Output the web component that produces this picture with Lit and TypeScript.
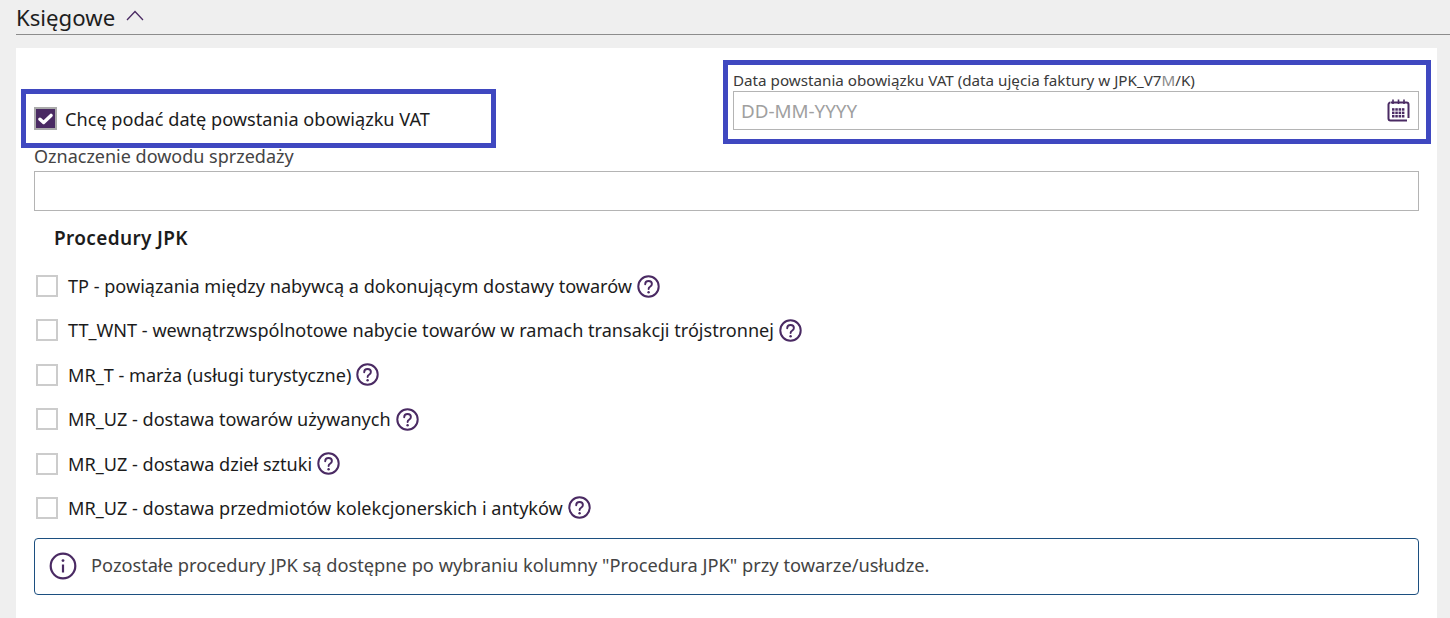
import { LitElement, html, css, svg } from "lit";
import { customElement } from "lit/decorators.js";

const rows = [
  "TP - powiązania między nabywcą a dokonującym dostawy towarów",
  "TT_WNT - wewnątrzwspólnotowe nabycie towarów w ramach transakcji trójstronnej",
  "MR_T - marża (usługi turystyczne)",
  "MR_UZ - dostawa towarów używanych",
  "MR_UZ - dostawa dzieł sztuki",
  "MR_UZ - dostawa przedmiotów kolekcjonerskich i antyków",
];

const dots = [0, 1, 2].flatMap((r) =>
  [0, 1, 2, 3].map((c) => svg`<rect x=${5 + c * 3.3} y=${9.2 + r * 3.4} width="2.5" height="2.5" fill="#4a2a63"></rect>`)
);

@customElement("app-root")
export class AppRoot extends LitElement {
  static styles = css`
    :host {
      display: block;
      width: 1450px;
      height: 618px;
      overflow: hidden;
      background: #efefef;
      font-family: "Noto Sans", "Open Sans", sans-serif;
      color: #222;
    }
    .head {
      margin-left: 16px;
      height: 34px;
      border-bottom: 1px solid #8c8c8c;
      display: flex;
      align-items: center;
      gap: 11px;
      font-size: 22.2px;
      color: #1e1e1e;
    }
    .head svg { margin-top: -3px; }
    .card {
      margin: 13px 13px 0 16px;
      height: 571px;
      background: #fff;
      padding: 12px 0 0 5px;
      box-sizing: border-box;
    }
    .top {
      display: flex;
      justify-content: space-between;
      height: 88px;
      padding-right: 6px;
    }
    .box {
      border: 5px solid #3f48c0;
      box-sizing: border-box;
    }
    .box1 {
      width: 475px;
      height: 59px;
      align-self: flex-end;
      display: flex;
      align-items: center;
      padding-left: 8px;
      gap: 8px;
      font-size: 18.15px;
      color: #1c1c1c;
    }
    .checked {
      width: 23px;
      height: 23px;
      box-sizing: border-box;
      background: #4a2a63;
      border: 2px solid #aaa;
      display: flex;
      align-items: center;
      justify-content: center;
    }
    .box2 {
      width: 708px;
      height: 84px;
      padding: 5px 7px 0 5px;
    }
    .label {
      font-size: 15.2px;
      line-height: 21px;
      color: #3a3a3a;
      white-space: nowrap;
    }
    .faint { color: #8a8a8a; }
    .input {
      height: 39px;
      box-sizing: border-box;
      border: 1px solid #b4b4b4;
      display: flex;
      align-items: center;
      justify-content: space-between;
      padding: 0 8px 0 7px;
      color: #a0a0a0;
      font-size: 18.8px;
    }
    .field {
      margin: 0 18px 0 13px;
    }
    .field .label {
      font-size: 18px;
      line-height: 23px;
      color: #444;
      margin: -3px 0 3px;
    }
    .field .input { height: 40px; }
    h3 {
      margin: 15px 0 0 33px;
      font-size: 19px;
      line-height: 24px;
      font-weight: 600;
      letter-spacing: 0.35px;
      color: #1c1c1c;
    }
    .rows {
      margin: 25px 0 0 15px;
      display: flex;
      flex-direction: column;
      gap: 22.4px;
    }
    .row {
      display: flex;
      align-items: center;
      height: 22px;
      font-size: 18.1px;
      color: #1c1c1c;
      white-space: nowrap;
    }
    .cb {
      width: 22px;
      height: 22px;
      box-sizing: border-box;
      border: 2px solid #ccc;
      margin-right: 10px;
      flex: none;
    }
    .help { margin-left: 5px; flex: none; }
    .info {
      margin: 19px 18px 0 13px;
      height: 57px;
      box-sizing: border-box;
      border: 1px solid #1c4f80;
      border-radius: 4px;
      display: flex;
      align-items: center;
      padding-left: 14px;
      gap: 14px;
      font-size: 18.25px;
      color: #444;
      white-space: nowrap;
    }
    .info span { margin-bottom: 3px; }
  `;

  private help() {
    return html`<svg class="help" width="23" height="23" viewBox="0 0 23 23" fill="none">
      <circle cx="11.5" cy="11.5" r="10.2" stroke="#4a2a63" stroke-width="2"></circle>
      <path d="M8.2 9.2c0-2 1.5-3.2 3.4-3.2 1.9 0 3.3 1.2 3.3 2.9 0 1.5-.9 2.2-1.9 2.9-.9.6-1.4 1.1-1.4 2.2" stroke="#4a2a63" stroke-width="1.9" stroke-linecap="round"></path>
      <circle cx="11.6" cy="17.2" r="1.2" fill="#4a2a63"></circle>
    </svg>`;
  }

  render() {
    return html`
      <div class="head">
        <span>Księgowe</span>
        <svg width="18" height="11" viewBox="0 0 18 11" fill="none">
          <path d="M1 10 9 1.5 17 10" stroke="#4a2a63" stroke-width="1.3"></path>
        </svg>
      </div>
      <div class="card">
        <div class="top">
          <div class="box box1">
            <span class="checked">
              <svg width="15" height="12" viewBox="0 0 15 12" fill="none">
                <path d="M2 6.2 5.6 9.4 13 2.4" stroke="#fff" stroke-width="3.4" stroke-linecap="round" stroke-linejoin="round"></path>
              </svg>
            </span>
            <span>Chcę podać datę powstania obowiązku VAT</span>
          </div>
          <div class="box box2">
            <div class="label">Data powstania obowiązku VAT (data ujęcia faktury w JPK_V7<span class="faint">M</span>/K)</div>
            <div class="input">
              <span>DD-MM-YYYY</span>
              <svg width="23" height="23" viewBox="0 0 23 23" fill="none">
                <path d="M4 3.5H19.5A2 2 0 0 1 21.5 5.5V19M20 21.5H3.5A2 2 0 0 1 1.5 19.5V5.5A2 2 0 0 1 3.5 3.5" stroke="#4a2a63" stroke-width="2"></path>
                <path d="M6 .5v4.5M11.5 .5v4.5M17 .5v4.5" stroke="#4a2a63" stroke-width="1.6"></path>
                ${dots}
              </svg>
            </div>
          </div>
        </div>
        <div class="field">
          <div class="label">Oznaczenie dowodu sprzedaży</div>
          <div class="input"></div>
        </div>
        <h3>Procedury JPK</h3>
        <div class="rows">
          ${rows.map(
            (r) => html`<div class="row"><span class="cb"></span><span>${r}</span>${this.help()}</div>`
          )}
        </div>
        <div class="info">
          <svg width="28" height="28" viewBox="0 0 28 28" fill="none">
            <circle cx="14" cy="14" r="12.3" stroke="#4a2a63" stroke-width="2.2"></circle>
            <circle cx="14" cy="8.6" r="1.4" fill="#4a2a63"></circle>
            <path d="M14 12.5V20.5" stroke="#4a2a63" stroke-width="2.2"></path>
          </svg>
          <span>Pozostałe procedury JPK są dostępne po wybraniu kolumny "Procedura JPK" przy towarze/usłudze.</span>
        </div>
      </div>
    `;
  }
}
